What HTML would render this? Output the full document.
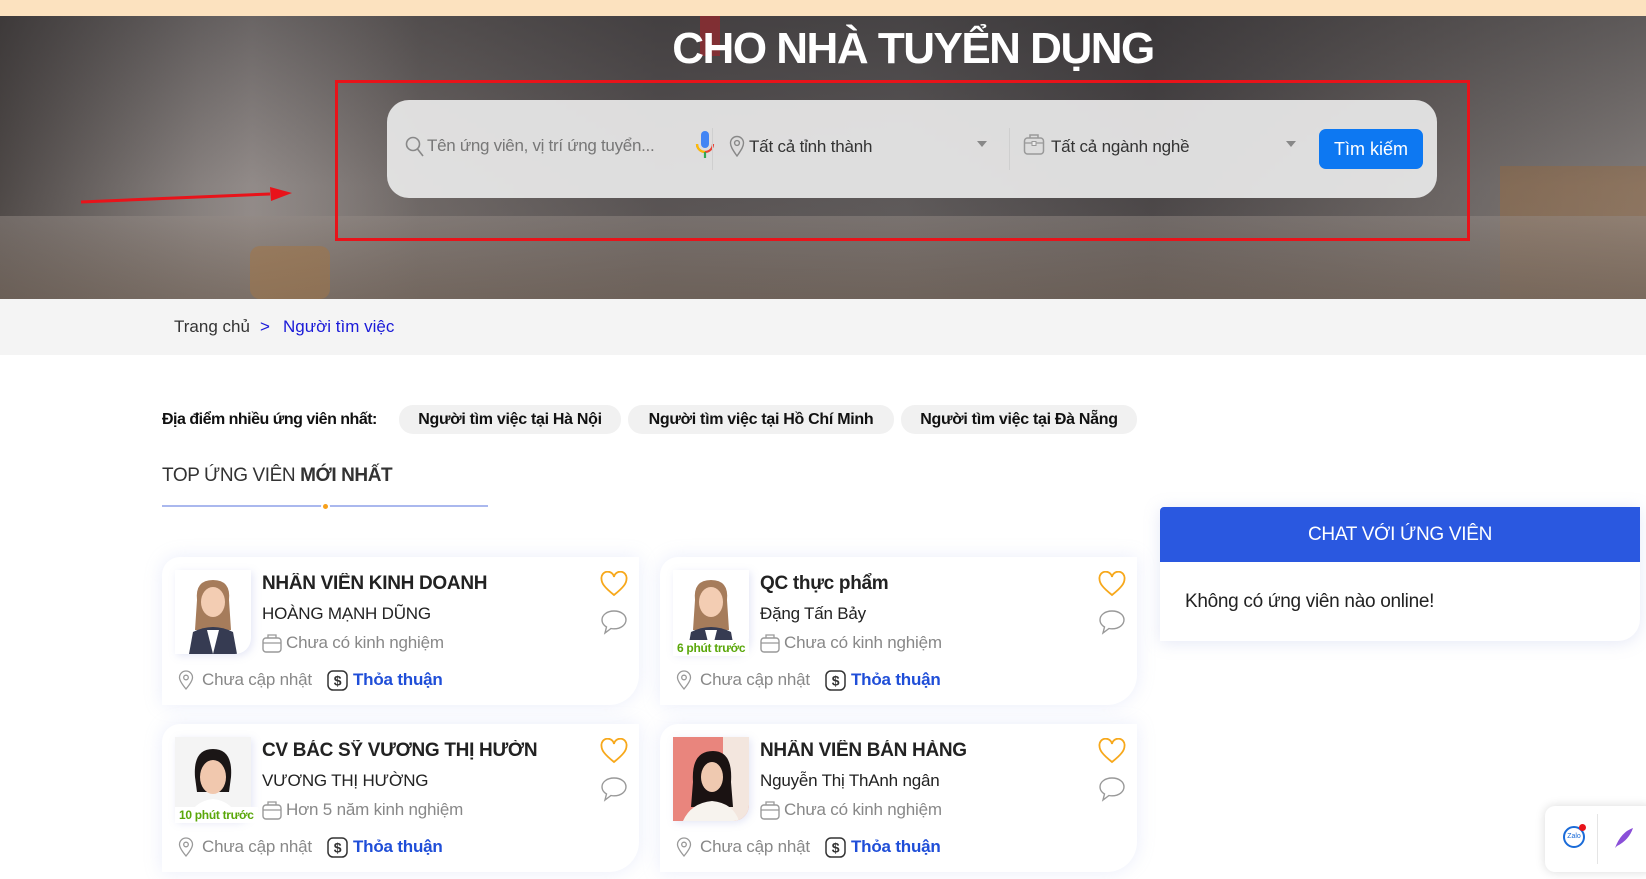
<!DOCTYPE html>
<html><head><meta charset="utf-8"><style>
*{box-sizing:border-box;margin:0;padding:0}
body{width:1646px;height:879px;overflow:hidden;background:#fff;font-family:"Liberation Sans",Arial,sans-serif;position:relative;color:#222}
.abs{position:absolute}
#topbar{left:0;top:0;width:1646px;height:16px;background:#fce2bf}
#hero{left:0;top:16px;width:1646px;height:283px;overflow:hidden;
background:linear-gradient(90deg,#5b5654 0%,#8a8583 12%,#7a7371 22%,#5a5556 40%,#605c5d 55%,#4a4648 70%,#6b6564 85%,#8a8482 100%)}
#hero .shade{left:0;top:0;width:100%;height:100%;background:linear-gradient(180deg,rgba(40,38,40,.45) 0%,rgba(70,65,62,.15) 60%,rgba(120,110,100,.3) 100%)}
#hero .wall{left:0;top:0;width:420px;height:283px;background:linear-gradient(90deg,rgba(74,68,67,.7),rgba(170,162,160,.7) 60%,rgba(184,178,177,0))}
#hero .table{left:0;top:200px;width:1646px;height:83px;background:linear-gradient(180deg,rgba(160,150,145,.5),rgba(110,95,85,.7))}
#hero .chair{left:250px;top:230px;width:80px;height:53px;background:#b67a3a;opacity:.5;border-radius:10px}
#hero .chair2{left:1500px;top:150px;width:146px;height:133px;background:#b0743a;opacity:.4}
h1{left:0;width:1826px;top:24px;text-align:center;color:#fff;font-size:44px;font-weight:bold;letter-spacing:-1.5px}
#redbox{left:335px;top:80px;width:1135px;height:161px;border:3px solid #e8131a}
#arrow{left:80px;top:186px}
#search{left:387px;top:100px;width:1050px;height:98px;border-radius:22px;background:rgba(232,232,232,.93)}
.ph{font-size:17px;color:#777;letter-spacing:-0.3px}
.sel{font-size:17px;color:#333;letter-spacing:-0.2px}
.sep{width:1px;height:42px;background:#cfcfcf;top:28px}
#btn{left:932px;top:29px;width:104px;height:40px;background:#0d78f2;color:#fff;border-radius:7px;font-size:18px;text-align:center;line-height:40px}
#bc{left:0;top:299px;width:1646px;height:56px;background:#f4f4f4}
#bc span{font-size:17px}
.chip{top:405px;height:29px;background:#f1f1f1;border-radius:14px;font-size:16px;font-weight:bold;color:#111;line-height:29px;text-align:center;letter-spacing:-0.3px}
.card{width:477px;height:148px;background:#fff;border-radius:0 0 30px 0;box-shadow:0 0 18px rgba(160,175,230,.22);border-top-left-radius:18px}
.card .av{left:13px;top:13px;width:76px;height:84px;border-radius:0 0 16px 0;overflow:hidden;background:#fff;box-shadow:2px 2px 8px rgba(150,160,220,.25)}
.card .t{left:100px;top:16px;font-size:19px;font-weight:bold;color:#222;white-space:nowrap;width:275px;overflow:hidden;letter-spacing:-0.3px}
.card .n{left:100px;top:47px;font-size:17px;color:#222;letter-spacing:-0.2px}
.card .e{left:100px;top:76px;font-size:17px;color:#888;padding-left:24px;letter-spacing:-0.2px}
.card .l{left:16px;top:113px;font-size:17px;color:#888;padding-left:24px;letter-spacing:-0.2px}
.card .p{left:165px;top:113px;font-size:17px;color:#1f4ed8;font-weight:bold;padding-left:26px;letter-spacing:-0.2px}
.card .heart{left:438px;top:14px}
.card .cmt{left:438px;top:52px}
.badge{left:13px;top:83px;font-size:12px;font-weight:bold;color:#5aa70a;background:#fff;padding:1px 4px;letter-spacing:-0.3px}
#chat{left:1160px;top:507px;width:480px;height:134px;background:#fff;border-radius:0 0 22px 0;box-shadow:0 2px 16px rgba(150,165,220,.25)}
#chat .h{left:0;top:0;width:480px;height:55px;background:#2a58e0;color:#fff;font-size:19px;text-align:center;line-height:55px;border-radius:4px 0 0 0;letter-spacing:-0.3px}
#chat .b{left:25px;top:84px;font-size:19px;color:#222;letter-spacing:-0.3px}
#zalo{left:1545px;top:806px;width:110px;height:66px;background:#fff;border-radius:10px;box-shadow:0 0 10px rgba(0,0,0,.15)}
</style></head><body>
<div id="topbar" class="abs"></div>
<div id="hero" class="abs">
 <div class="abs wall"></div>
 <div class="abs chair2"></div>
 <div class="abs table"></div>
 <div class="abs chair"></div>
 <div class="abs shade"></div>
 <div class="abs" style="left:700px;top:0;width:20px;height:40px;background:#a8232a;opacity:.6"></div>
</div>
<h1 class="abs">CHO NHÀ TUYỂN DỤNG</h1>
<div id="redbox" class="abs"></div>
<svg id="arrow" class="abs" width="215" height="20"><line x1="1" y1="16" x2="190" y2="8" stroke="#e8131a" stroke-width="3"/><polygon points="190,1 212,7 191,15" fill="#e8131a"/></svg>
<div id="search" class="abs">
 <svg class="abs" style="left:18px;top:36px" width="20" height="22" viewBox="0 0 20 22"><circle cx="8" cy="8" r="6.5" fill="none" stroke="#888" stroke-width="1.6"/><line x1="12.5" y1="13" x2="18" y2="20" stroke="#888" stroke-width="1.6"/></svg>
 <div class="abs ph" style="left:40px;top:36px">Tên ứng viên, vị trí ứng tuyển...</div>
 <svg class="abs" style="left:308px;top:30px" width="20" height="30" viewBox="0 0 20 30"><rect x="6" y="1" width="8" height="17" rx="4" fill="#4285f4"/><path d="M2 14 a8 8 0 0 0 16 0" fill="none" stroke="#ea4335" stroke-width="2.2"/><path d="M2 14 a8 8 0 0 0 8 8" fill="none" stroke="#fbbc05" stroke-width="2.2"/><line x1="10" y1="22" x2="10" y2="28" stroke="#34a853" stroke-width="2.2"/></svg>
 <div class="abs sep" style="left:325px"></div>
 <svg class="abs" style="left:342px;top:35px" width="16" height="22" viewBox="0 0 16 22"><path d="M8 21 C3 14 1.5 11 1.5 8 a6.5 6.5 0 0 1 13 0 c0 3-1.5 6-6.5 13z" fill="none" stroke="#888" stroke-width="1.4"/><circle cx="8" cy="8" r="2.4" fill="none" stroke="#888" stroke-width="1.4"/></svg>
 <div class="abs sel" style="left:362px;top:37px">Tất cả tỉnh thành</div>
 <div class="abs" style="left:590px;top:41px;width:0;height:0;border-left:5px solid transparent;border-right:5px solid transparent;border-top:6px solid #888"></div>
 <div class="abs sep" style="left:622px"></div>
 <svg class="abs" style="left:636px;top:32px" width="22" height="24" viewBox="0 0 22 24"><rect x="1.5" y="6" width="19" height="16" rx="3" fill="none" stroke="#999" stroke-width="1.5"/><path d="M7 6 V3 h8 v3" fill="none" stroke="#999" stroke-width="1.5"/><path d="M1.5 11 h19" stroke="#999" stroke-width="1.3"/><rect x="9" y="9.5" width="4" height="4" fill="#eee" stroke="#999"/></svg>
 <div class="abs sel" style="left:664px;top:37px">Tất cả ngành nghề</div>
 <div class="abs" style="left:899px;top:41px;width:0;height:0;border-left:5px solid transparent;border-right:5px solid transparent;border-top:6px solid #888"></div>
 <div id="btn" class="abs">Tìm kiếm</div>
</div>
<div id="bc" class="abs">
 <span class="abs" style="left:174px;top:18px;color:#333">Trang chủ</span>
 <span class="abs" style="left:260px;top:18px;color:#1a1ad8">&gt;</span>
 <span class="abs" style="left:283px;top:18px;color:#1a1ad8">Người tìm việc</span>
</div>
<div class="abs" style="left:162px;top:411px;font-size:16px;font-weight:bold;color:#111;letter-spacing:-0.5px">Địa điểm nhiều ứng viên nhất:</div>
<div class="abs chip" style="left:399px;width:222px">Người tìm việc tại Hà Nội</div>
<div class="abs chip" style="left:628px;width:266px">Người tìm việc tại Hồ Chí Minh</div>
<div class="abs chip" style="left:901px;width:236px">Người tìm việc tại Đà Nẵng</div>
<div class="abs" style="left:162px;top:465px;font-size:19px;color:#333;letter-spacing:-0.4px">TOP ỨNG VIÊN <b>MỚI NHẤT</b></div>
<div class="abs" style="left:162px;top:505px;width:326px;height:2px;background:#aab8ee"></div>
<div class="abs" style="left:323px;top:504px;width:5px;height:5px;background:#f7a01a;border-radius:50%;box-shadow:0 0 0 2px #fff"></div>

<div class="abs card" style="left:162px;top:557px">
 <div class="abs av"><svg width="76" height="84" viewBox="0 0 76 84"><path d="M22 30 Q20 10 38 10 Q56 10 54 30 L56 60 L20 60z" fill="#a67c5b"/><ellipse cx="38" cy="32" rx="12" ry="15" fill="#f3cdb3"/><path d="M14 84 L18 62 Q38 52 58 62 L62 84z" fill="#363b52"/><path d="M32 60 L38 84 L44 60z" fill="#fff"/></svg></div>
 <div class="abs t">NHÂN VIÊN KINH DOANH</div><div class="abs n">HOÀNG MẠNH DŨNG</div>
 <div class="abs e"><svg class="abs" style="left:0;top:0" width="20" height="20" viewBox="0 0 20 20"><rect x="1" y="5" width="18" height="14" rx="3" fill="none" stroke="#999" stroke-width="1.4"/><path d="M6 5V2h8v3M1 10h18" fill="none" stroke="#999" stroke-width="1.3"/></svg>Chưa có kinh nghiệm</div>
 <div class="abs l"><svg class="abs" style="left:0;top:0" width="16" height="20" viewBox="0 0 16 20"><path d="M8 19C3 13 1.5 10 1.5 7.5a6.5 6.5 0 0 1 13 0C14.5 10 13 13 8 19z" fill="none" stroke="#999" stroke-width="1.3"/><circle cx="8" cy="7.5" r="2.3" fill="none" stroke="#999" stroke-width="1.3"/></svg>Chưa cập nhật</div>
 <div class="abs p"><svg class="abs" style="left:0;top:0" width="21" height="21" viewBox="0 0 21 21"><rect x="1" y="1" width="19" height="19" rx="5" fill="none" stroke="#333" stroke-width="1.5"/><text x="10.5" y="15.5" font-size="14" text-anchor="middle" fill="#333" font-family="Liberation Sans">$</text></svg>Thỏa thuận</div>
 <svg class="abs heart" width="28" height="26" viewBox="0 0 28 26"><path d="M14 24 C4 16 1.5 12 1.5 8 a6 6 0 0 1 12.5-2 a6 6 0 0 1 12.5 2 c0 4-2.5 8-12.5 16z" fill="none" stroke="#f7a81b" stroke-width="1.8"/></svg>
 <svg class="abs cmt" width="28" height="26" viewBox="0 0 28 26"><path d="M14 2C7 2 2 6 2 11c0 3 2 5.5 4.5 7L5 24l6-4.5c1 .2 2 .3 3 .3 7 0 12-4 12-9S21 2 14 2z" fill="none" stroke="#999" stroke-width="1.4"/></svg>
</div>

<div class="abs card" style="left:660px;top:557px">
 <div class="abs av"><svg width="76" height="84" viewBox="0 0 76 84"><path d="M22 30 Q20 10 38 10 Q56 10 54 30 L56 60 L20 60z" fill="#a67c5b"/><ellipse cx="38" cy="32" rx="12" ry="15" fill="#f3cdb3"/><path d="M14 84 L18 62 Q38 52 58 62 L62 84z" fill="#363b52"/><path d="M32 60 L38 84 L44 60z" fill="#fff"/></svg></div>
 <div class="abs badge">6 phút trước</div>
 <div class="abs t">QC thực phẩm</div><div class="abs n">Đặng Tấn Bảy</div>
 <div class="abs e"><svg class="abs" style="left:0;top:0" width="20" height="20" viewBox="0 0 20 20"><rect x="1" y="5" width="18" height="14" rx="3" fill="none" stroke="#999" stroke-width="1.4"/><path d="M6 5V2h8v3M1 10h18" fill="none" stroke="#999" stroke-width="1.3"/></svg>Chưa có kinh nghiệm</div>
 <div class="abs l"><svg class="abs" style="left:0;top:0" width="16" height="20" viewBox="0 0 16 20"><path d="M8 19C3 13 1.5 10 1.5 7.5a6.5 6.5 0 0 1 13 0C14.5 10 13 13 8 19z" fill="none" stroke="#999" stroke-width="1.3"/><circle cx="8" cy="7.5" r="2.3" fill="none" stroke="#999" stroke-width="1.3"/></svg>Chưa cập nhật</div>
 <div class="abs p"><svg class="abs" style="left:0;top:0" width="21" height="21" viewBox="0 0 21 21"><rect x="1" y="1" width="19" height="19" rx="5" fill="none" stroke="#333" stroke-width="1.5"/><text x="10.5" y="15.5" font-size="14" text-anchor="middle" fill="#333" font-family="Liberation Sans">$</text></svg>Thỏa thuận</div>
 <svg class="abs heart" width="28" height="26" viewBox="0 0 28 26"><path d="M14 24 C4 16 1.5 12 1.5 8 a6 6 0 0 1 12.5-2 a6 6 0 0 1 12.5 2 c0 4-2.5 8-12.5 16z" fill="none" stroke="#f7a81b" stroke-width="1.8"/></svg>
 <svg class="abs cmt" width="28" height="26" viewBox="0 0 28 26"><path d="M14 2C7 2 2 6 2 11c0 3 2 5.5 4.5 7L5 24l6-4.5c1 .2 2 .3 3 .3 7 0 12-4 12-9S21 2 14 2z" fill="none" stroke="#999" stroke-width="1.4"/></svg>
</div>

<div class="abs card" style="left:162px;top:724px">
 <div class="abs av"><svg width="76" height="84" viewBox="0 0 76 84"><rect width="76" height="84" fill="#f4f4f4"/><path d="M20 40 Q18 12 38 12 Q58 12 56 40 L54 55 L22 55z" fill="#1b1616"/><ellipse cx="38" cy="40" rx="13" ry="17" fill="#f1c8ae"/><path d="M12 84 Q18 64 38 62 Q58 64 64 84z" fill="#fff"/></svg></div>
 <div class="abs badge">10 phút trước</div>
 <div class="abs t">CV BÁC SỸ VƯƠNG THỊ HƯỜNG</div><div class="abs n">VƯƠNG THỊ HƯỜNG</div>
 <div class="abs e"><svg class="abs" style="left:0;top:0" width="20" height="20" viewBox="0 0 20 20"><rect x="1" y="5" width="18" height="14" rx="3" fill="none" stroke="#999" stroke-width="1.4"/><path d="M6 5V2h8v3M1 10h18" fill="none" stroke="#999" stroke-width="1.3"/></svg>Hơn 5 năm kinh nghiệm</div>
 <div class="abs l"><svg class="abs" style="left:0;top:0" width="16" height="20" viewBox="0 0 16 20"><path d="M8 19C3 13 1.5 10 1.5 7.5a6.5 6.5 0 0 1 13 0C14.5 10 13 13 8 19z" fill="none" stroke="#999" stroke-width="1.3"/><circle cx="8" cy="7.5" r="2.3" fill="none" stroke="#999" stroke-width="1.3"/></svg>Chưa cập nhật</div>
 <div class="abs p"><svg class="abs" style="left:0;top:0" width="21" height="21" viewBox="0 0 21 21"><rect x="1" y="1" width="19" height="19" rx="5" fill="none" stroke="#333" stroke-width="1.5"/><text x="10.5" y="15.5" font-size="14" text-anchor="middle" fill="#333" font-family="Liberation Sans">$</text></svg>Thỏa thuận</div>
 <svg class="abs heart" width="28" height="26" viewBox="0 0 28 26"><path d="M14 24 C4 16 1.5 12 1.5 8 a6 6 0 0 1 12.5-2 a6 6 0 0 1 12.5 2 c0 4-2.5 8-12.5 16z" fill="none" stroke="#f7a81b" stroke-width="1.8"/></svg>
 <svg class="abs cmt" width="28" height="26" viewBox="0 0 28 26"><path d="M14 2C7 2 2 6 2 11c0 3 2 5.5 4.5 7L5 24l6-4.5c1 .2 2 .3 3 .3 7 0 12-4 12-9S21 2 14 2z" fill="none" stroke="#999" stroke-width="1.4"/></svg>
</div>

<div class="abs card" style="left:660px;top:724px">
 <div class="abs av"><svg width="76" height="84" viewBox="0 0 76 84"><rect width="76" height="84" fill="#e9857d"/><rect x="50" width="26" height="84" fill="#f3e6de"/><path d="M20 45 Q18 14 40 14 Q60 14 58 45 L60 70 L18 70z" fill="#1a1212"/><ellipse cx="39" cy="40" rx="11" ry="15" fill="#efc9b0"/><path d="M10 84 Q18 66 39 64 Q60 66 66 84z" fill="#f7f3ee"/></svg></div>
 <div class="abs t">NHÂN VIÊN BÁN HÀNG</div><div class="abs n">Nguyễn Thị ThAnh ngân</div>
 <div class="abs e"><svg class="abs" style="left:0;top:0" width="20" height="20" viewBox="0 0 20 20"><rect x="1" y="5" width="18" height="14" rx="3" fill="none" stroke="#999" stroke-width="1.4"/><path d="M6 5V2h8v3M1 10h18" fill="none" stroke="#999" stroke-width="1.3"/></svg>Chưa có kinh nghiệm</div>
 <div class="abs l"><svg class="abs" style="left:0;top:0" width="16" height="20" viewBox="0 0 16 20"><path d="M8 19C3 13 1.5 10 1.5 7.5a6.5 6.5 0 0 1 13 0C14.5 10 13 13 8 19z" fill="none" stroke="#999" stroke-width="1.3"/><circle cx="8" cy="7.5" r="2.3" fill="none" stroke="#999" stroke-width="1.3"/></svg>Chưa cập nhật</div>
 <div class="abs p"><svg class="abs" style="left:0;top:0" width="21" height="21" viewBox="0 0 21 21"><rect x="1" y="1" width="19" height="19" rx="5" fill="none" stroke="#333" stroke-width="1.5"/><text x="10.5" y="15.5" font-size="14" text-anchor="middle" fill="#333" font-family="Liberation Sans">$</text></svg>Thỏa thuận</div>
 <svg class="abs heart" width="28" height="26" viewBox="0 0 28 26"><path d="M14 24 C4 16 1.5 12 1.5 8 a6 6 0 0 1 12.5-2 a6 6 0 0 1 12.5 2 c0 4-2.5 8-12.5 16z" fill="none" stroke="#f7a81b" stroke-width="1.8"/></svg>
 <svg class="abs cmt" width="28" height="26" viewBox="0 0 28 26"><path d="M14 2C7 2 2 6 2 11c0 3 2 5.5 4.5 7L5 24l6-4.5c1 .2 2 .3 3 .3 7 0 12-4 12-9S21 2 14 2z" fill="none" stroke="#999" stroke-width="1.4"/></svg>
</div>

<div id="chat" class="abs"><div class="abs h">CHAT VỚI ỨNG VIÊN</div><div class="abs b">Không có ứng viên nào online!</div></div>
<div id="zalo" class="abs">
 <div class="abs" style="left:18px;top:20px;width:22px;height:22px;border:2px solid #1a6bd8;border-radius:50%;font-size:7px;color:#1a6bd8;text-align:center;line-height:18px">Zalo</div>
 <div class="abs" style="left:34px;top:18px;width:7px;height:7px;background:#e8131a;border-radius:50%"></div>
 <div class="abs" style="left:52px;top:8px;width:1px;height:50px;background:#e5e5e5"></div>
 <svg class="abs" style="left:68px;top:20px" width="22" height="24" viewBox="0 0 22 24"><path d="M2 22 Q8 6 20 2 Q16 14 4 20z" fill="#8a4fd8"/></svg>
</div>
</body></html>
